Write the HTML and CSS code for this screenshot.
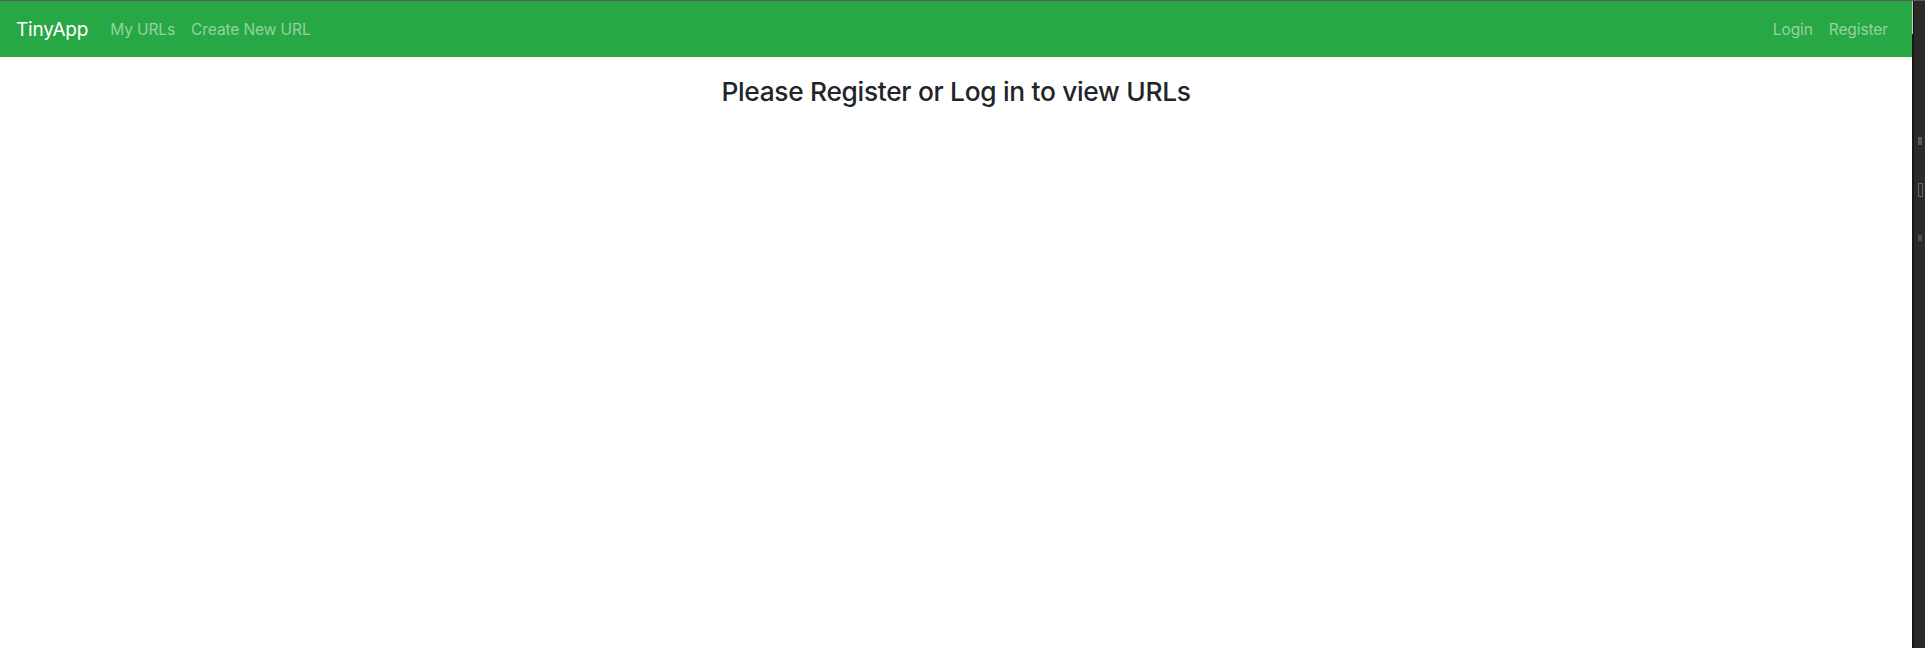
FILE: index.html
```html
<!DOCTYPE html>
<html lang="en">
<head>
<meta charset="utf-8">
<title>TinyApp</title>
<link rel="stylesheet" href="styles.css">
</head>
<body>
<div class="window">
  <div class="page">
    <nav class="navbar">
      <div class="nav-left">
        <a class="brand" href="#">TinyApp</a>
        <a class="nav-link" href="#">My URLs</a>
        <a class="nav-link" href="#">Create New URL</a>
      </div>
      <div class="nav-right">
        <a class="nav-link" href="#">Login</a>
        <a class="nav-link" href="#">Register</a>
      </div>
    </nav>
    <main class="content">
      <h3 class="title">Please Register or Log in to view URLs</h3>
    </main>
  </div>
  <aside class="side-panel">
    <div class="side-edge"></div>
    <div class="side-body">
      <span class="mark m1"></span>
      <span class="mark m2"></span>
      <span class="mark m3"></span>
    </div>
  </aside>
</div>
</body>
</html>
```
FILE: styles.css
```css
* { box-sizing: border-box; }
html, body { margin: 0; padding: 0; height: 100%; }
body {
  font-family: Inter, "Noto Sans", "Liberation Sans", sans-serif;
  background: #ffffff;
  color: #212529;
}
.window {
  display: flex;
  height: 648px;
  border-top: 1px solid #5a5a5a;
}
.page {
  flex: 1;
  background: #fff;
  min-width: 0;
}
.navbar {
  height: 56px;
  background: #28a745;
  display: flex;
  align-items: center;
  justify-content: space-between;
  padding: 0 16px;
}
.nav-left, .nav-right { display: flex; align-items: center; }
.brand {
  color: #fff;
  font-size: 19px;
  text-decoration: none;
  margin-right: 14px;
  letter-spacing: -0.2px;
}
.nav-link {
  color: rgba(255,255,255,0.5);
  font-size: 15.5px;
  text-decoration: none;
  padding: 0 8px;
  letter-spacing: -0.1px;
}
.content { display: flex; justify-content: center; }
.title {
  margin: 19px 0 0;
  font-size: 26.3px;
  font-weight: 500;
  line-height: 1.2;
  letter-spacing: -0.3px;
  color: #212529;
}
.side-panel {
  width: 13px;
  display: flex;
  background: #2b2a26;
}
.side-edge {
  width: 2px;
  background: linear-gradient(to bottom, #c9c9c9 0, #c9c9c9 33px, #1a1a18 33px);
  border-right: 1px solid #121210;
}
.side-body {
  flex: 1;
  display: flex;
  flex-direction: column;
  padding-top: 136px;
  padding-left: 4px;
  gap: 38px;
}
.mark { display: block; width: 4px; height: 8px; background: #5a5955; }
.m2 { height: 14px; width: 5px; background: none; border: 1px solid #66655f; }
.m3 { height: 6px; background: #4e4d49; }
```
